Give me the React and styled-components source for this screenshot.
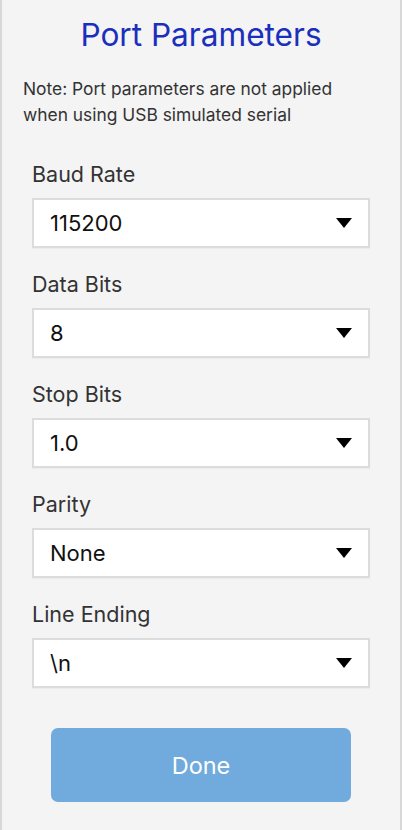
import React from "react";
import styled, { createGlobalStyle } from "styled-components";

const GlobalStyle = createGlobalStyle`
  html, body {
    margin: 0;
    padding: 0;
    background: #f4f4f4;
  }
  body {
    font-family: Inter, "Noto Sans", "Liberation Sans", sans-serif;
  }
`;

const Frame = styled.div`
  box-sizing: border-box;
  width: 402px;
  min-height: 830px;
  background: #f4f4f4;
  border-left: 2px solid #d8d8d8;
  border-right: 2px solid #d8d8d8;
  display: flex;
  flex-direction: column;
`;

const Title = styled.h1`
  margin: 15px 0 0;
  text-align: center;
  font-size: 31.6px;
  font-weight: 400;
  line-height: 40px;
  color: #1b2fbd;
`;

const Note = styled.p`
  margin: 21px 0 0 21px;
  font-size: 17.4px;
  line-height: 26px;
  color: #333;
`;

const Fields = styled.div`
  display: flex;
  flex-direction: column;
  gap: 23px;
  padding: 33px 30px 0 30px;
`;

const Field = styled.div`
  display: flex;
  flex-direction: column;
  gap: 11px;
`;

const Label = styled.label`
  font-size: 21.5px;
  line-height: 26px;
  color: #333;
`;

const Select = styled.div`
  box-sizing: border-box;
  height: 50px;
  display: flex;
  align-items: center;
  justify-content: space-between;
  padding: 0 16px 0 16px;
  background: #fff;
  border: 2px solid #dcdcdc;
  box-shadow: 0 1px 1px rgba(0, 0, 0, 0.03);
  font-size: 22px;
  color: #111;
`;

const Caret = styled.svg`
  width: 16px;
  height: 10px;
  display: block;
`;

const Footer = styled.div`
  display: flex;
  justify-content: center;
  padding-top: 40px;
`;

const DoneButton = styled.button`
  width: 300px;
  height: 74px;
  border: none;
  border-radius: 7px;
  background: #71aadd;
  color: #fff;
  font-family: inherit;
  font-size: 23.5px;
`;

const fields = [
  ["Baud Rate", "115200"],
  ["Data Bits", "8"],
  ["Stop Bits", "1.0"],
  ["Parity", "None"],
  ["Line Ending", "\\n"],
];

export default function App() {
  return (
    <>
      <GlobalStyle />
      <Frame>
        <Title>Port Parameters</Title>
        <Note>
          Note: Port parameters are not applied
          <br />
          when using USB simulated serial
        </Note>
        <Fields>
          {fields.map(([label, value]) => (
            <Field key={label}>
              <Label>{label}</Label>
              <Select>
                <span>{value}</span>
                <Caret viewBox="0 0 16 10">
                  <path d="M0 0 H16 L8 10 Z" fill="#000" />
                </Caret>
              </Select>
            </Field>
          ))}
        </Fields>
        <Footer>
          <DoneButton>Done</DoneButton>
        </Footer>
      </Frame>
    </>
  );
}
